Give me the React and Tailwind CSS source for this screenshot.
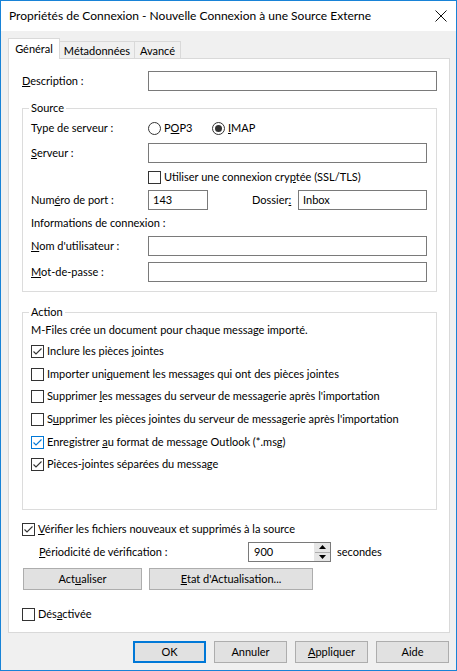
import React from "react";

const Check = ({ checked, blue }) => (
  <span
    className={
      "relative w-[13px] h-[13px] shrink-0 border bg-white " +
      (blue ? "border-[#0078d7]" : "border-[#333333]")
    }
  >
    {checked && (
      <svg width="11" height="11" viewBox="0 0 11 11" className="absolute left-0 top-0">
        <path
          d="M1.5 5.5 L4 8 L9.5 2.5"
          fill="none"
          stroke={blue ? "#0078d7" : "#333333"}
          strokeWidth="1.1"
        />
      </svg>
    )}
  </span>
);

const CheckRow = ({ checked, blue, className = "", children }) => (
  <div className={"flex items-center h-[16px] " + className}>
    <Check checked={checked} blue={blue} />
    <span className="ml-[3px]">{children}</span>
  </div>
);

const Radio = ({ selected }) => (
  <span className="w-[13px] h-[13px] rounded-full border border-[#333333] bg-white flex items-center justify-center shrink-0">
    {selected && <span className="w-[7px] h-[7px] rounded-full bg-[#333333]" />}
  </span>
);

const Input = ({ className = "", value = "" }) => (
  <div
    className={
      "h-[20px] border border-[#7a7a7a] bg-white flex items-center pl-[4px] " + className
    }
  >
    {value}
  </div>
);

const Button = ({ className = "", children, primary }) => (
  <div
    className={
      "h-[22px] flex items-center justify-center bg-[#e1e1e1] " +
      (primary ? "border-2 border-[#0078d7] " : "border border-[#adadad] ") +
      className
    }
  >
    {children}
  </div>
);

export default function App() {
  return (
    <div className="w-[457px] h-[671px] border border-[#1883d7] bg-[#f0f0f0] flex flex-col font-['Lato',sans-serif] text-[11px] leading-[16px] text-black">
      {/* Title bar */}
      <div className="h-[30px] bg-white flex items-center justify-between pl-[8px] pr-[9px] shrink-0 text-[12px]">
        <span>Propriétés de Connexion - Nouvelle Connexion à une Source Externe</span>
        <svg width="12" height="12" viewBox="0 0 12 12">
          <path d="M0.5 0.5 L11.5 11.5 M11.5 0.5 L0.5 11.5" stroke="#111" strokeWidth="1" fill="none" />
        </svg>
      </div>

      {/* Tabs */}
      <div className="pt-[7px] pl-[7px] flex items-end h-[28px] shrink-0">
        <div className="relative z-10 w-[52px] h-[21px] bg-white border border-b-0 border-[#d9d9d9] flex items-start justify-center pt-[2px]">
          Général
        </div>
        <div className="w-[75px] h-[18px] border border-l-0 border-b-0 border-[#d9d9d9] flex items-center justify-center">
          Métadonnées
        </div>
        <div className="w-[46px] h-[18px] border border-l-0 border-b-0 border-[#d9d9d9] flex items-center justify-center">
          Avancé
        </div>
      </div>

      {/* Panel */}
      <div className="ml-[7px] -mt-px w-[442px] h-[575px] bg-white border border-[#d9d9d9] flex flex-col shrink-0">
        <div className="mt-[12px] pl-[13px] flex items-center">
          <span className="w-[126px]">
            <u>D</u>escription :
          </span>
          <Input className="w-[289px]" />
        </div>

        {/* Source */}
        <fieldset className="ml-[13px] mt-[9px] w-[415px] border border-[#dcdcdc] pb-[9px]">
          <legend className="ml-[6px] px-[2px] leading-[16px]">Source</legend>
          <div className="pl-[8px] flex flex-col">
            <div className="mt-[2px] h-[20px] flex items-center">
              <span className="w-[117px]">Type de serveur :</span>
              <Radio />
              <span className="ml-[3px] w-[48px]">
                P<u>O</u>P3
              </span>
              <Radio selected />
              <span className="ml-[3px]">
                <u>I</u>MAP
              </span>
            </div>
            <div className="mt-[5px] flex items-center">
              <span className="w-[117px]">
                <u>S</u>erveur :
              </span>
              <Input className="w-[279px]" />
            </div>
            <div className="mt-[4px] h-[20px] flex items-center pl-[117px]">
              <Check />
              <span className="ml-[3px]">
                Utiliser une connexion cry<u>p</u>tée (SSL/TLS)
              </span>
            </div>
            <div className="mt-[3px] flex items-center">
              <span className="w-[117px]">
                Num<u>é</u>ro de port :
              </span>
              <Input className="w-[60px]" value="143" />
              <span className="ml-[44px] w-[46px]">
                Dossier<u>:</u>
              </span>
              <Input className="w-[129px]" value="Inbox" />
            </div>
            <div className="mt-[5px] h-[16px] flex items-center">Informations de connexion :</div>
            <div className="mt-[5px] flex items-center">
              <span className="w-[117px]">
                <u>N</u>om d'utilisateur :
              </span>
              <Input className="w-[279px]" />
            </div>
            <div className="mt-[6px] flex items-center">
              <span className="w-[117px]">
                <u>M</u>ot-de-passe :
              </span>
              <Input className="w-[279px]" />
            </div>
          </div>
        </fieldset>

        {/* Action */}
        <fieldset className="ml-[13px] mt-[12px] w-[415px] border border-[#dcdcdc] pb-[37px]">
          <legend className="ml-[6px] px-[2px] leading-[16px]">Action</legend>
          <div className="pl-[8px] flex flex-col">
            <div className="mt-[2px] h-[16px] flex items-center">
              M-Files crée un document pour chaque message importé.
            </div>
            <CheckRow checked className="mt-[5px]">
              Inclure les pièces <u>j</u>ointes
            </CheckRow>
            <CheckRow className="mt-[7px]">
              Importer uni<u>q</u>uement les messages qui ont des pièces jointes
            </CheckRow>
            <CheckRow className="mt-[6px]">
              Supprimer <u>l</u>es messages du serveur de messagerie après l'importation
            </CheckRow>
            <CheckRow className="mt-[7px]">
              S<u>u</u>pprimer les pièces jointes du serveur de messagerie après l'importation
            </CheckRow>
            <CheckRow checked blue className="mt-[7px]">
              Enregistrer <u>a</u>u format de message Outlook (*.msg)
            </CheckRow>
            <CheckRow checked className="mt-[6px]">
              Pièces-jointes séparées du messa<u>g</u>e
            </CheckRow>
          </div>
        </fieldset>

        <CheckRow checked className="mt-[11px] ml-[13px]">
          <u>V</u>érifier les fichiers nouveaux et supprimés à la source
        </CheckRow>

        <div className="mt-[5px] ml-[30px] h-[20px] flex items-center">
          <span className="w-[209px]">
            <u>P</u>ériodicité de vérification :
          </span>
          <div className="w-[83px] h-[20px] border border-[#7a7a7a] bg-white flex">
            <span className="flex-1 pl-[5px] flex items-center">900</span>
            <div className="w-[16px] flex flex-col border-l border-[#e6e6e6]">
              <div className="flex-1 bg-[#e6e6e6] border-b border-[#adadad] flex items-center justify-center">
                <svg width="7" height="4" viewBox="0 0 7 4">
                  <path d="M0 4 L3.5 0 L7 4 Z" fill="#000" />
                </svg>
              </div>
              <div className="flex-1 bg-[#e6e6e6] flex items-center justify-center">
                <svg width="7" height="4" viewBox="0 0 7 4">
                  <path d="M0 0 L3.5 4 L7 0 Z" fill="#000" />
                </svg>
              </div>
            </div>
          </div>
          <span className="ml-[6px]">secondes</span>
        </div>

        <div className="mt-[6px] ml-[14px] flex gap-[7px]">
          <Button className="w-[119px]">
            Act<u>u</u>aliser
          </Button>
          <Button className="w-[164px]">
            <u>E</u>tat d'Actualisation...
          </Button>
        </div>

        <CheckRow className="mt-[16px] ml-[13px]">
          Dés<u>a</u>ctivée
        </CheckRow>
      </div>

      {/* Bottom buttons */}
      <div className="mt-[8px] pr-[7px] flex justify-end gap-[8px]">
        <Button primary className="w-[73px]">
          OK
        </Button>
        <Button className="w-[73px]">Annuler</Button>
        <Button className="w-[73px]">
          <u>A</u>ppliquer
        </Button>
        <Button className="w-[73px]">Aide</Button>
      </div>
    </div>
  );
}
